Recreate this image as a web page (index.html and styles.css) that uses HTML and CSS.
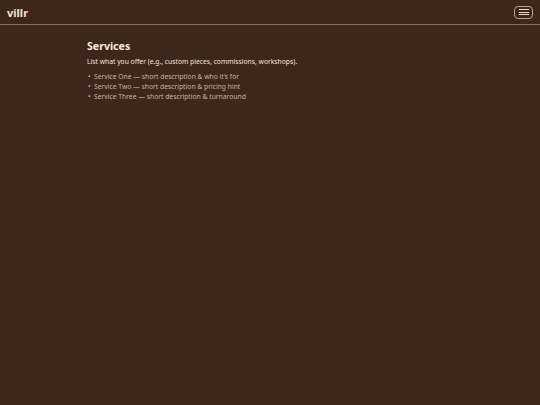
FILE: index.html
```html
<!DOCTYPE html>
<html>
<head>
<meta charset="utf-8">
<link rel="stylesheet" href="styles.css">
</head>
<body>
<header class="topbar">
  <div class="brand">villr</div>
  <button class="menu-btn" aria-label="Menu">
    <span></span><span></span><span></span>
  </button>
</header>
<main class="content">
  <h1 class="title">Services</h1>
  <p class="lead">List what you offer (e.g., custom pieces, commissions, workshops).</p>
  <ul class="list">
    <li>Service One — short description &amp; who it’s for</li>
    <li>Service Two — short description &amp; pricing hint</li>
    <li>Service Three — short description &amp; turnaround</li>
  </ul>
</main>
</body>
</html>
```
FILE: styles.css
```css
html, body {
  margin: 0;
  padding: 0;
  background: #3e261b;
  height: 100%;
}
body {
  font-family: "Noto Sans", "Open Sans", sans-serif;
  color: #efe3d3;
}
.topbar {
  height: 24px;
  display: flex;
  align-items: center;
  justify-content: space-between;
  padding: 0 7px;
  border-bottom: 1px solid #8a7263;
}
.brand {
  font-weight: 700;
  font-size: 11px;
  color: #efe3d3;
}
.menu-btn {
  width: 19px;
  height: 13px;
  border: 1px solid #b3a08f;
  border-radius: 4px;
  background: transparent;
  padding: 0;
  display: flex;
  flex-direction: column;
  justify-content: center;
  align-items: center;
  gap: 1.5px;
}
.menu-btn span {
  display: block;
  width: 10px;
  height: 1px;
  background: #e8dccd;
}
.content {
  max-width: 366px;
  margin: 0 auto;
  padding-top: 14px;
}
.title {
  margin: 0 0 4px 0;
  font-size: 10.6px;
  font-weight: 700;
  color: #f3e9dc;
}
.lead {
  margin: 0 0 6px 0;
  font-size: 6.75px;
  color: #f1e6d8;
}
.list {
  list-style: none;
  margin: 0;
  padding: 0;
  font-size: 6.75px;
  line-height: 10px;
  color: #c6b3a1;
}
.list li {
  display: flex;
}
.list li::before {
  content: "•";
  width: 6px;
  padding-left: 1px;
  color: #c6b3a1;
}
```
